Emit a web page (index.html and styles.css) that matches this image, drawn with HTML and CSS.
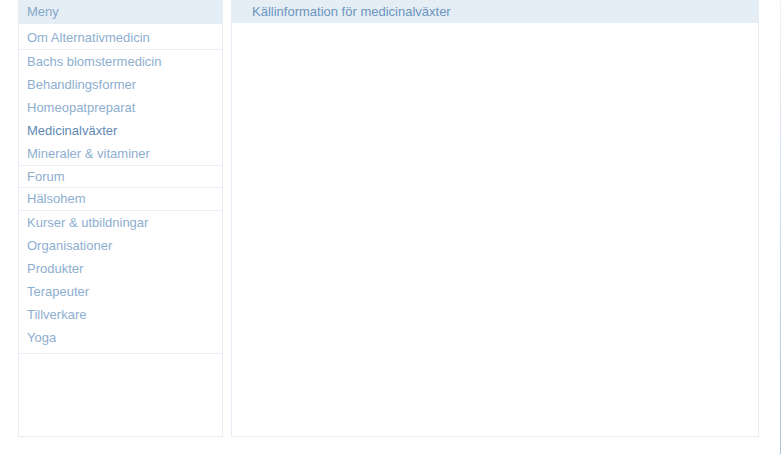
FILE: index.html
```html
<!DOCTYPE html>
<html lang="sv">
<head>
    <meta charset="UTF-8">
    <meta name="viewport" content="width=device-width, initial-scale=1.0">
    <title>Källinformation för medicinalväxter</title>
    <link rel="stylesheet" href="styles.css">
</head>
<body>
    <div class="page">
        <div class="panel menu-panel">
            <div class="panel-head head-menu">Meny</div>
            <div class="panel-body">
                <ul class="menu">
                    <li class="sep"><a href="#">Om Alternativmedicin</a></li>
                    <li><a href="#">Bachs blomstermedicin</a></li>
                    <li><a href="#">Behandlingsformer</a></li>
                    <li><a href="#">Homeopatpreparat</a></li>
                    <li class="active"><a href="#">Medicinalväxter</a></li>
                    <li><a href="#">Mineraler &amp; vitaminer</a></li>
                    <li class="sep sep-top"><a href="#">Forum</a></li>
                    <li class="sep"><a href="#">Hälsohem</a></li>
                    <li><a href="#">Kurser &amp; utbildningar</a></li>
                    <li><a href="#">Organisationer</a></li>
                    <li><a href="#">Produkter</a></li>
                    <li><a href="#">Terapeuter</a></li>
                    <li><a href="#">Tillverkare</a></li>
                    <li><a href="#">Yoga</a></li>
                </ul>
            </div>
        </div>
        <div class="panel content-panel">
            <div class="panel-head head-content">Källinformation för medicinalväxter</div>
            <div class="panel-body"></div>
        </div>
        <div class="edge"></div>
    </div>
</body>
</html>
```

FILE: styles.css
```css
html, body {
    margin: 0;
    padding: 0;
}
body {
    font-family: "Liberation Sans", Arial, sans-serif;
    font-size: 13px;
    background: #fff;
    color: #8eaed0;
}
.page {
    display: flex;
    height: 454px;
    padding-left: 18px;
    box-sizing: border-box;
}
.panel {
    display: flex;
    flex-direction: column;
    height: 437px;
}
.menu-panel {
    width: 205px;
}
.content-panel {
    width: 528px;
    margin-left: 8px;
}
.panel-head {
    background: #e5edf5;
    color: #84a7ca;
    box-sizing: border-box;
}
.head-menu {
    height: 24px;
    line-height: 24px;
    padding-left: 9px;
}
.head-content {
    height: 23px;
    line-height: 23px;
    padding-left: 21px;
    color: #6c95be;
}
.panel-body {
    flex: 1;
    border: 1px solid #e5ecf3;
    border-top: none;
}
.menu {
    list-style: none;
    margin: 0;
    padding: 3px 0 4px;
    border-bottom: 1px solid #e9eff5;
}
.menu li {
    height: 23px;
    line-height: 23px;
    padding-left: 8px;
    box-sizing: border-box;
}
.menu li.sep {
    border-bottom: 1px solid #e9eff5;
    line-height: 22px;
}
.menu li.sep-top {
    border-top: 1px solid #e9eff5;
    line-height: 21px;
}
.menu a {
    color: #8eaed0;
    text-decoration: none;
}
.menu li.active a {
    color: #6189b4;
}
.edge {
    width: 1px;
    margin-left: auto;
    background: linear-gradient(#eef3f8, #a9c5de);
}
```
